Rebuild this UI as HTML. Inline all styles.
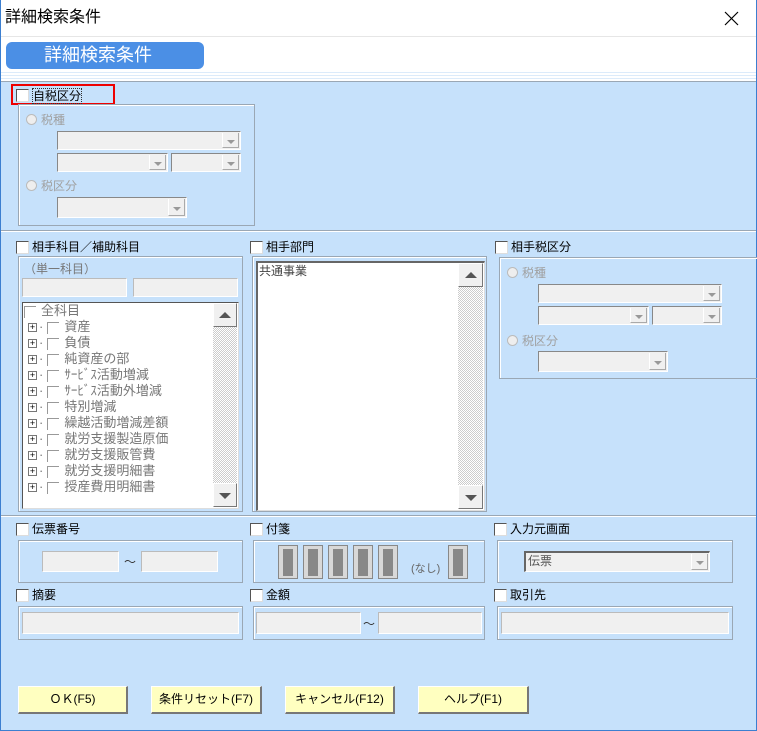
<!DOCTYPE html>
<html><head><meta charset="utf-8"><style>
*{box-sizing:border-box;margin:0;padding:0}
body{width:757px;height:731px;position:relative;overflow:hidden;background:#c6e1fb;font-family:"Liberation Sans","Noto Sans CJK JP",sans-serif;font-size:12px;color:#000}
.a{position:absolute}
.cb{position:absolute;width:13px;height:13px;background:#fff;border-top:1px solid #555;border-left:1px solid #555;border-right:1px solid #ddd;border-bottom:1px solid #ddd}
.lbl{position:absolute;font-size:12px;line-height:14px;white-space:nowrap}
.grp{position:absolute;border:1px solid #9aa7b4;box-shadow:inset 1px 1px 0 #fff}
.fld{position:absolute;background:#f0f0f0;border-top:1px solid #bbb;border-left:1px solid #bbb;border-right:1px solid #fff;border-bottom:1px solid #fff}
.cmb{position:absolute;background:#f0f0f0;border-top:1px solid #888;border-left:1px solid #888;border-right:1px solid #fff;border-bottom:1px solid #fff}
.cmb:after{content:"";position:absolute;right:1px;top:1px;bottom:1px;width:15px;background:#f0f0f0;border-left:1px solid #fff;border-right:1px solid #aaa;border-bottom:1px solid #aaa}
.cmb:before{content:"";position:absolute;right:5px;top:50%;margin-top:-1px;border:4px solid transparent;border-top:4px solid #999;border-bottom:0;z-index:2}
.gray{color:#a0a0a0}
.rad{position:absolute;width:11px;height:11px;border-radius:50%;background:#eee;border:1px solid #bbb}
.btn{position:absolute;height:28px;background:#ffffc0;border-top:1px solid #fff;border-left:1px solid #fff;border-right:2px solid #777;border-bottom:2px solid #777;text-align:center;line-height:25px;font-size:12px}
.sb{position:absolute;background:repeating-conic-gradient(#ccc 0 25%,#fff 0 50%) 0 0/2px 2px}
.sbb{position:absolute;width:24px;height:24px;background:#f0f0f0;border-top:1px solid #fff;border-left:1px solid #fff;border-right:1px solid #777;border-bottom:1px solid #777}
.tag{position:absolute;top:545px;width:20px;height:34px;background:#d8d8d8;border:1px solid #888}
.tag:after{content:"";position:absolute;left:4px;top:3px;width:10px;height:27px;background:#888}
.tr{position:absolute;left:28px;font-size:13px;line-height:16px;color:#777;white-space:nowrap}
.tr b{display:inline-block;width:9px;height:9px;border:1px solid #777;background:#fff;font-weight:normal;font-size:9px;line-height:7px;text-align:center;color:#000;vertical-align:middle;margin-right:2px}
.tr i{display:inline-block;width:12px;height:12px;border-top:1px solid #999;border-left:1px solid #999;vertical-align:middle;margin:0 5px 0 4px}
.sep{position:absolute;left:1px;right:1px;height:2px;border-top:1px solid #9aa7b4;border-bottom:1px solid #fff}
</style></head><body>
<div class="a" style="left:0;top:0;width:757px;height:81px;background:#fff"></div>
<div class="a" style="left:0;top:0;width:1px;height:731px;background:#3c7fd0"></div>
<div class="a" style="right:0;top:0;width:1px;height:731px;background:#3c7fd0"></div>
<div class="a" style="left:0;bottom:0;width:757px;height:1px;background:#3c7fd0"></div>
<div class="lbl" style="left:5px;top:8px;font-size:16px;line-height:20px">詳細検索条件</div>
<svg class="a" style="left:724px;top:11px" width="15" height="15"><path d="M1 1L14 14M14 1L1 14" stroke="#000" stroke-width="1.2"/></svg>
<div class="a" style="left:1px;top:36px;width:755px;height:1px;background:#e6e6e6"></div>
<div class="a" style="left:6px;top:42px;width:198px;height:27px;background:#4b8fe5;border-radius:6px;color:#fff;font-size:18px;line-height:27px;padding-left:38px">詳細検索条件</div>
<div class="a" style="left:1px;top:70px;width:755px;height:11px;background:repeating-linear-gradient(#fff 0 2px,#dcebfa 2px 3px)"></div>
<div class="a" style="left:1px;top:81px;width:755px;height:1px;background:#9aa7b4"></div>

<div class="a" style="left:11px;top:84px;width:104px;height:21px;border:2px solid #e00"></div>
<div class="cb" style="left:16px;top:89px"></div>
<div class="lbl" style="left:32px;top:88px;border:1px dotted #333">自税区分</div>
<div class="grp" style="left:18px;top:104px;width:237px;height:122px"></div>
<div class="rad" style="left:26px;top:114px"></div><div class="lbl gray" style="left:41px;top:113px">税種</div>
<div class="cmb" style="left:57px;top:131px;width:184px;height:19px"></div>
<div class="cmb" style="left:57px;top:153px;width:111px;height:19px"></div>
<div class="cmb" style="left:171px;top:153px;width:70px;height:19px"></div>
<div class="rad" style="left:26px;top:180px"></div><div class="lbl gray" style="left:41px;top:179px">税区分</div>
<div class="cmb" style="left:57px;top:197px;width:130px;height:21px"></div>

<div class="sep" style="top:230px"></div>

<div class="cb" style="left:16px;top:241px"></div><div class="lbl" style="left:32px;top:240px">相手科目／補助科目</div>
<div class="grp" style="left:18px;top:256px;width:225px;height:256px"></div>
<div class="lbl gray" style="left:24px;top:262px;color:#777">（単一科目）</div>
<div class="fld" style="left:22px;top:278px;width:105px;height:19px"></div>
<div class="fld" style="left:133px;top:278px;width:105px;height:19px"></div>
<div class="a" style="left:22px;top:302px;width:217px;height:207px;background:#fff;border-top:1px solid #555;border-left:1px solid #555;border-right:1px solid #ddd;border-bottom:1px solid #ddd"></div>
<div class="sb" style="left:213px;top:303px;width:24px;height:204px"></div>
<div class="sbb" style="left:213px;top:303px"><div class="a" style="left:5px;top:8px;border:6px solid transparent;border-bottom:6px solid #555;border-top:0"></div></div>
<div class="sbb" style="left:213px;top:483px"><div class="a" style="left:5px;top:9px;border:6px solid transparent;border-top:6px solid #555;border-bottom:0"></div></div>
<div class="tr" style="left:24px;top:303px"><i style="margin-left:0"></i>全科目</div>
<div class="tr" style="top:319px"><b>+</b>·<i></i>資産</div>
<div class="tr" style="top:335px"><b>+</b>·<i></i>負債</div>
<div class="tr" style="top:351px"><b>+</b>·<i></i>純資産の部</div>
<div class="tr" style="top:367px"><b>+</b>·<i></i>ｻｰﾋﾞｽ活動増減</div>
<div class="tr" style="top:383px"><b>+</b>·<i></i>ｻｰﾋﾞｽ活動外増減</div>
<div class="tr" style="top:399px"><b>+</b>·<i></i>特別増減</div>
<div class="tr" style="top:415px"><b>+</b>·<i></i>繰越活動増減差額</div>
<div class="tr" style="top:431px"><b>+</b>·<i></i>就労支援製造原価</div>
<div class="tr" style="top:447px"><b>+</b>·<i></i>就労支援販管費</div>
<div class="tr" style="top:463px"><b>+</b>·<i></i>就労支援明細書</div>
<div class="tr" style="top:479px"><b>+</b>·<i></i>授産費用明細書</div>

<div class="cb" style="left:250px;top:241px"></div><div class="lbl" style="left:266px;top:240px">相手部門</div>
<div class="grp" style="left:252px;top:256px;width:235px;height:256px"></div>
<div class="a" style="left:256px;top:261px;width:229px;height:250px;background:#fff;border-top:2px solid #666;border-left:2px solid #666;border-right:1px solid #ddd;border-bottom:1px solid #ddd"></div>
<div class="lbl" style="left:259px;top:264px;color:#444">共通事業</div>
<div class="sb" style="left:458px;top:263px;width:25px;height:246px"></div>
<div class="sbb" style="left:458px;top:263px;width:25px"><div class="a" style="left:6px;top:8px;border:6px solid transparent;border-bottom:6px solid #555;border-top:0"></div></div>
<div class="sbb" style="left:458px;top:485px;width:25px"><div class="a" style="left:6px;top:9px;border:6px solid transparent;border-top:6px solid #555;border-bottom:0"></div></div>

<div class="cb" style="left:495px;top:241px"></div><div class="lbl" style="left:511px;top:240px">相手税区分</div>
<div class="grp" style="left:499px;top:257px;width:260px;height:122px"></div>
<div class="rad" style="left:507px;top:267px"></div><div class="lbl gray" style="left:522px;top:266px">税種</div>
<div class="cmb" style="left:538px;top:284px;width:184px;height:19px"></div>
<div class="cmb" style="left:538px;top:306px;width:111px;height:19px"></div>
<div class="cmb" style="left:652px;top:306px;width:70px;height:19px"></div>
<div class="rad" style="left:507px;top:335px"></div><div class="lbl gray" style="left:522px;top:334px">税区分</div>
<div class="cmb" style="left:538px;top:351px;width:130px;height:21px"></div>

<div class="sep" style="top:515px"></div>

<div class="cb" style="left:16px;top:523px"></div><div class="lbl" style="left:32px;top:522px">伝票番号</div>
<div class="grp" style="left:18px;top:540px;width:225px;height:43px"></div>
<div class="fld" style="left:42px;top:551px;width:77px;height:21px"></div>
<div class="lbl" style="left:124px;top:555px;color:#333">～</div>
<div class="fld" style="left:141px;top:551px;width:77px;height:21px"></div>

<div class="cb" style="left:250px;top:523px"></div><div class="lbl" style="left:266px;top:522px">付箋</div>
<div class="grp" style="left:253px;top:540px;width:232px;height:43px"></div>
<div class="tag" style="left:278px"></div><div class="tag" style="left:303px"></div><div class="tag" style="left:328px"></div><div class="tag" style="left:353px"></div><div class="tag" style="left:378px"></div>
<div class="lbl" style="left:411px;top:562px;color:#666;font-size:11px">(なし)</div>
<div class="tag" style="left:448px"></div>

<div class="cb" style="left:494px;top:523px"></div><div class="lbl" style="left:510px;top:522px">入力元画面</div>
<div class="grp" style="left:497px;top:540px;width:236px;height:43px"></div>
<div class="cmb" style="left:524px;top:551px;width:186px;height:21px;border-top:2px solid #666;border-left:2px solid #666"></div>
<div class="lbl" style="left:528px;top:554px;color:#555">伝票</div>

<div class="cb" style="left:16px;top:589px"></div><div class="lbl" style="left:32px;top:588px">摘要</div>
<div class="grp" style="left:18px;top:606px;width:225px;height:34px"></div>
<div class="fld" style="left:22px;top:612px;width:217px;height:22px"></div>

<div class="cb" style="left:250px;top:589px"></div><div class="lbl" style="left:266px;top:588px">金額</div>
<div class="grp" style="left:253px;top:606px;width:232px;height:34px"></div>
<div class="fld" style="left:256px;top:612px;width:105px;height:22px"></div>
<div class="lbl" style="left:363px;top:617px;color:#333">～</div>
<div class="fld" style="left:378px;top:612px;width:104px;height:22px"></div>

<div class="cb" style="left:494px;top:589px"></div><div class="lbl" style="left:510px;top:588px">取引先</div>
<div class="grp" style="left:497px;top:606px;width:236px;height:34px"></div>
<div class="fld" style="left:501px;top:612px;width:228px;height:22px"></div>

<div class="btn" style="left:18px;top:686px;width:110px">ＯＫ(F5)</div>
<div class="btn" style="left:151px;top:686px;width:111px">条件リセット(F7)</div>
<div class="btn" style="left:285px;top:686px;width:110px">キャンセル(F12)</div>
<div class="btn" style="left:418px;top:686px;width:111px">ヘルプ(F1)</div>
</body></html>
